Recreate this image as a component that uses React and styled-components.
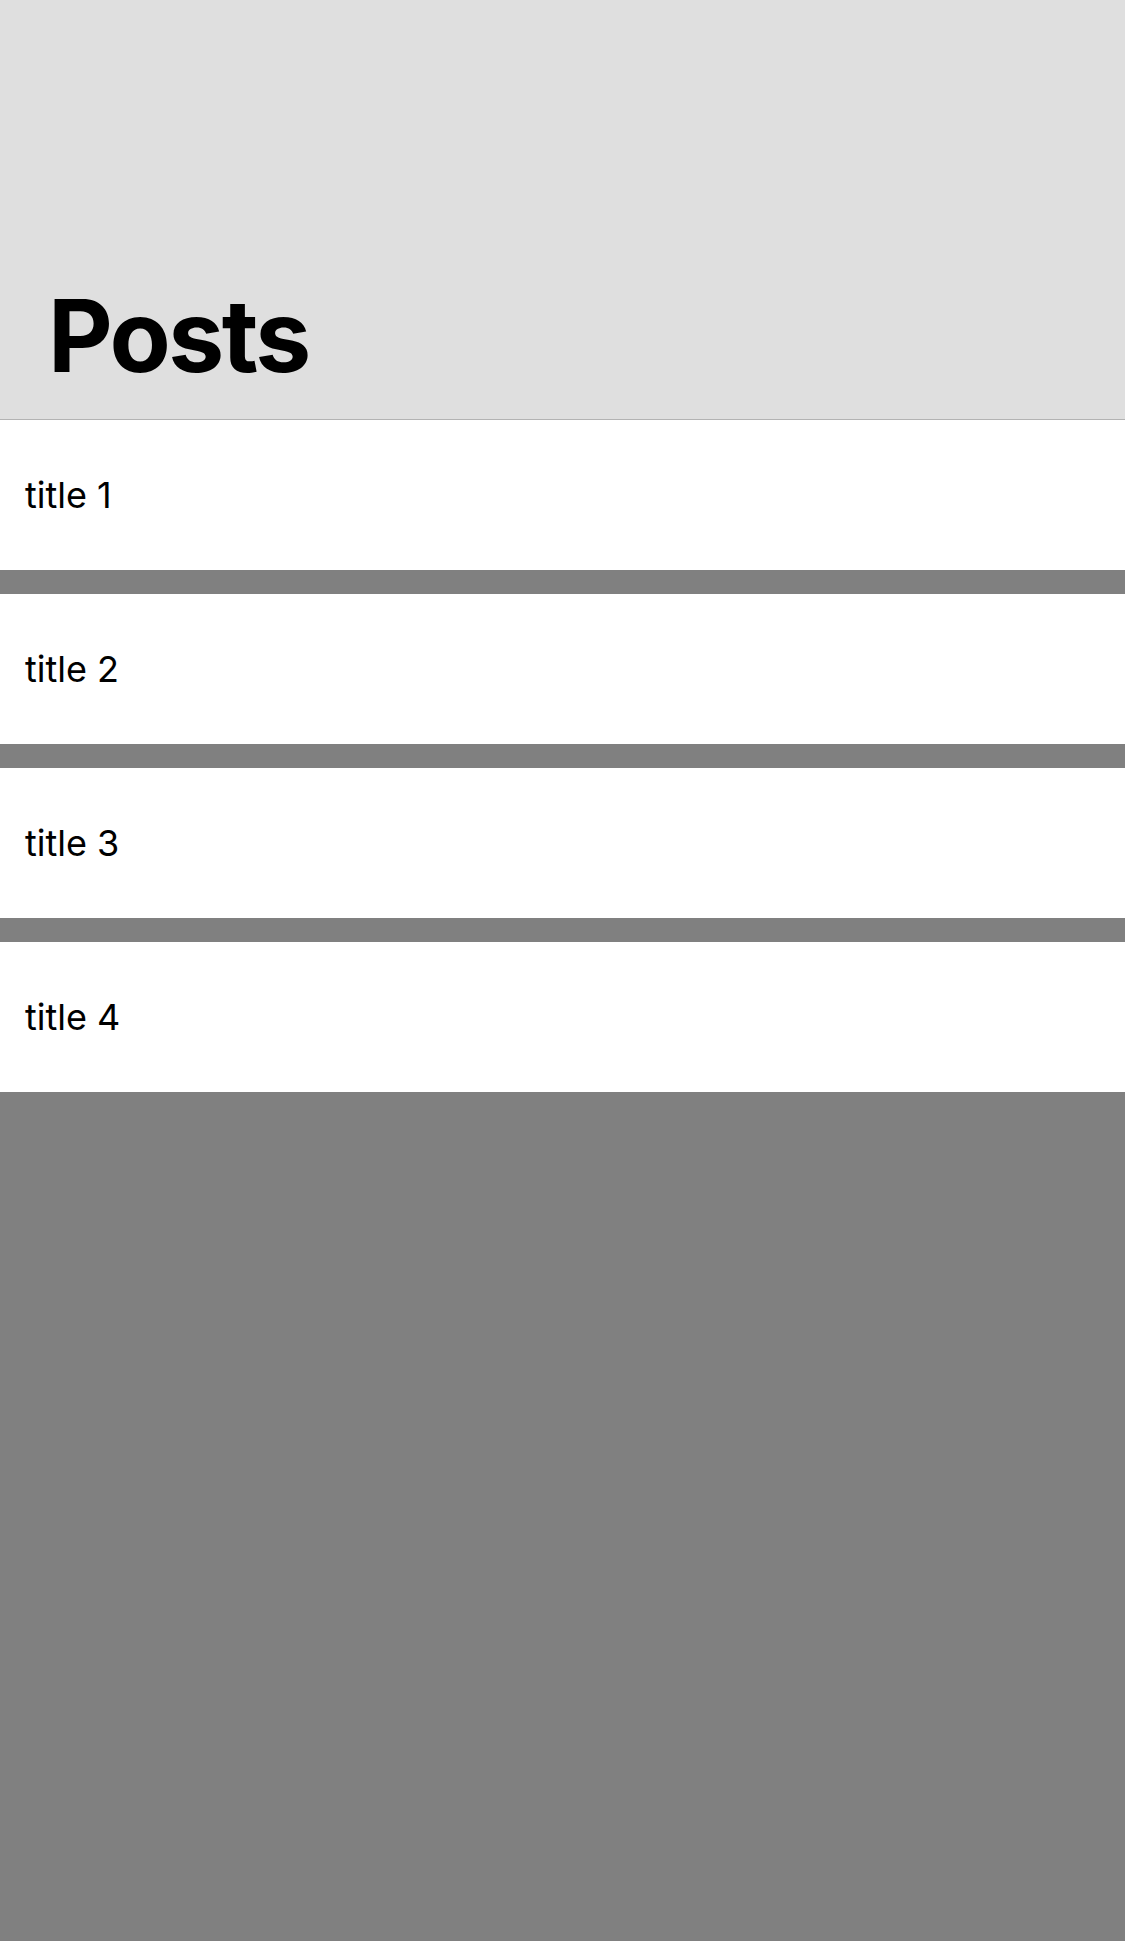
import React from 'react';
import styled, { createGlobalStyle } from 'styled-components';

const GlobalStyle = createGlobalStyle`
  html, body {
    margin: 0;
    padding: 0;
    background: #808080;
    font-family: 'Inter', 'Roboto', sans-serif;
  }
`;

const Screen = styled.div`
  min-height: 100vh;
  background: #808080;
`;

const Header = styled.header`
  height: 420px;
  box-sizing: border-box;
  background: #dfdfdf;
  border-bottom: 1px solid #b3b3b3;
  display: flex;
  align-items: flex-end;
  padding: 0 48px 33px;
`;

const LargeTitle = styled.h1`
  margin: 0;
  font-size: 100px;
  line-height: 1;
  font-weight: 700;
  letter-spacing: -2.5px;
  color: #000;
`;

const List = styled.div`
  display: flex;
  flex-direction: column;
  gap: 24px;
`;

const Row = styled.div`
  height: 150px;
  background: #fff;
  display: flex;
  align-items: center;
  padding: 0 25px;
  font-size: 36px;
  color: #000;
`;

const posts = [
  { id: 1, title: 'title 1' },
  { id: 2, title: 'title 2' },
  { id: 3, title: 'title 3' },
  { id: 4, title: 'title 4' },
];

function App() {
  return (
    <Screen>
      <GlobalStyle />
      <Header>
        <LargeTitle>Posts</LargeTitle>
      </Header>
      <List>
        {posts.map((post) => (
          <Row key={post.id}>{post.title}</Row>
        ))}
      </List>
    </Screen>
  );
}

export default App;
